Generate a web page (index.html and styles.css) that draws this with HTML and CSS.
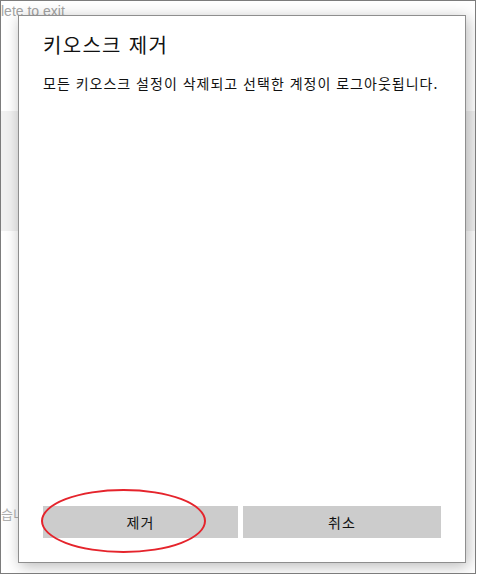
FILE: index.html
```html
<!DOCTYPE html>
<html lang="ko">
  <head>
    <meta charset="UTF-8" />
    <meta name="viewport" content="width=device-width, initial-scale=1.0" />
    <title>키오스크 제거</title>
    <link rel="stylesheet" href="styles.css">
  </head>
  <body>
    <div class="screen">
      <div class="backdrop">
        <p class="back-text">lete to exit</p>
        <div class="back-band"></div>
        <p class="back-text back-bottom">습니다</p>
      </div>

      <div class="dialog">
        <h2>키오스크 제거</h2>
        <p class="message">모든 키오스크 설정이 삭제되고 선택한 계정이 로그아웃됩니다.</p>
        <div class="buttons">
          <button class="btn">제거</button>
          <button class="btn">취소</button>
        </div>
      </div>

      <div class="highlight"></div>
    </div>
  </body>
</html>
```

FILE: styles.css
```css
* {
  margin: 0;
  padding: 0;
  box-sizing: border-box;
}

body {
  background: #ffffff;
  font-family: "Noto Sans CJK KR", "Noto Sans", sans-serif;
}

.screen {
  position: relative;
  width: 476px;
  height: 574px;
  border: 1px solid #7c7c7c;
  background: #ffffff;
  overflow: hidden;
}

.backdrop {
  display: flex;
  flex-direction: column;
  height: 100%;
}

.back-text {
  font-family: "Liberation Sans", "Noto Sans CJK KR", sans-serif;
  font-size: 14px;
  line-height: 19px;
  color: #a3a3a3;
  padding-top: 1px;
}

.back-band {
  margin-top: 90px;
  height: 120px;
  background: #f1f1f1;
}

.back-bottom {
  margin-top: auto;
  margin-bottom: 50px;
  font-family: "Noto Sans CJK KR", sans-serif;
  font-size: 13px;
  color: #b0b0b0;
}

.dialog {
  position: absolute;
  left: 17px;
  top: 14px;
  width: 448px;
  height: 548px;
  background: #ffffff;
  border: 1px solid #8e8e8e;
  box-shadow: 2px 3px 14px rgba(0, 0, 0, 0.28);
  display: flex;
  flex-direction: column;
  padding: 15px 23px 24px 24px;
}

.dialog h2 {
  font-size: 20px;
  font-weight: 400;
  line-height: 28px;
  letter-spacing: 1.3px;
  color: #111111;
}

.message {
  flex: 1;
  margin-top: 14px;
  font-size: 14px;
  line-height: 20px;
  letter-spacing: 1px;
  color: #111111;
}

.buttons {
  display: grid;
  grid-template-columns: 195px 1fr;
  gap: 5px;
  padding-right: 1px;
}

.btn {
  height: 32px;
  border: none;
  background: #cccccc;
  font-family: "Noto Sans CJK KR", sans-serif;
  font-size: 14px;
  letter-spacing: 1px;
  color: #111111;
}

.highlight {
  position: absolute;
  left: 40px;
  top: 488px;
  width: 165px;
  height: 64px;
  border: 2px solid #e5242c;
  border-radius: 50%;
}
```
